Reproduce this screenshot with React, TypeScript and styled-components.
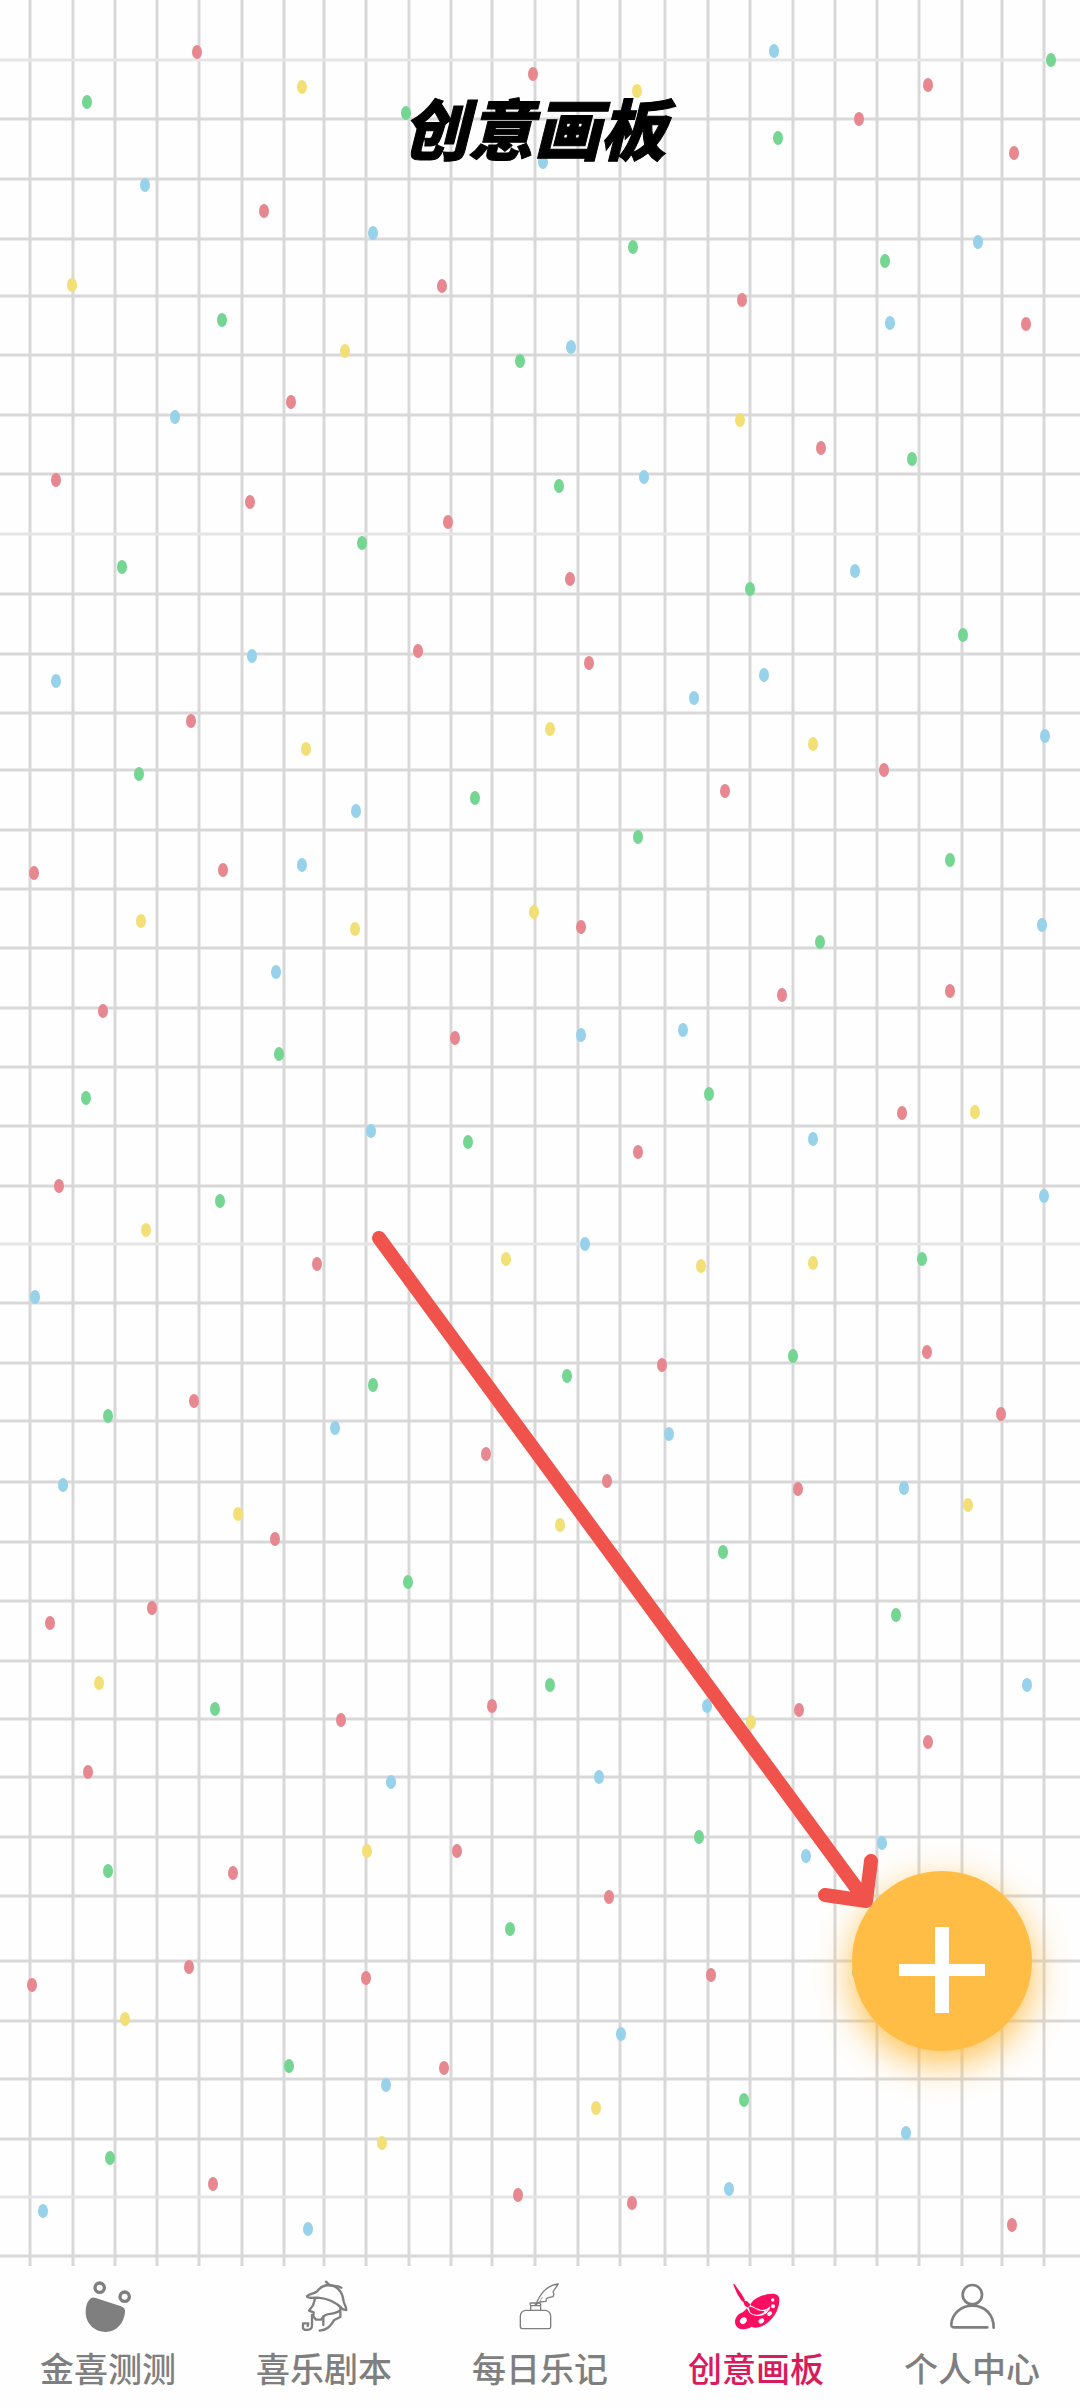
import React, { useState } from "react";
import styled, { createGlobalStyle } from "styled-components";

const Colors = {
    paper: "#fefefe",
    line: "#d9d8d8",
    softLine: "#e6e5e5",
    grey: "#7f7f7f",
    pink: "#d91a5c",
    brightPink: "#fb0d5f",
    orange: "#ffbd45",
    arrow: "#f0524c",
    black: "#000",
    white: "#fff",
};

const GlobalStyle = createGlobalStyle`
    * {
        box-sizing: border-box;
    }
    body {
        margin: 0;
        background: ${Colors.paper};
        font-family: "Noto Sans CJK SC", "Noto Sans", sans-serif;
    }
`;

const Page = styled.div`
    display: flex;
    flex-direction: column;
    min-height: 100vh;
`;

const Board = styled.main`
    position: relative;
    flex: 1;
    display: flex;
    flex-direction: column;
    align-items: center;
    padding-top: 86px;
`;

const Backdrop = styled.svg`
    position: absolute;
    inset: 0;
    width: 100%;
    height: 100%;
`;

const Pointer = styled(Backdrop)`
    pointer-events: none;
`;

const Title = styled.h1`
    position: relative;
    margin: 0;
    padding-right: 12px;
    font-size: 66px;
    line-height: 80px;
    font-weight: 900;
    font-style: italic;
    color: ${Colors.black};
    -webkit-text-stroke: 1px ${Colors.black};
`;

const AddButton = styled.button`
    position: absolute;
    right: 48px;
    bottom: 215px;
    display: flex;
    align-items: center;
    justify-content: center;
    width: 180px;
    height: 180px;
    padding: 18px 0 0;
    border: none;
    border-radius: 50%;
    background: ${Colors.orange};
    box-shadow: 0 12px 36px rgba(255, 182, 50, 0.85);
    cursor: pointer;
`;

const TabBar = styled.nav`
    display: flex;
    background: ${Colors.paper};
`;

const Tab = styled.a<{ $active: boolean }>`
    flex: 1;
    display: flex;
    flex-direction: column;
    align-items: center;
    gap: 14px;
    padding: 14px 0 20px;
    color: ${({ $active }) => ($active ? Colors.pink : Colors.grey)};
    font-size: 34px;
    line-height: 40px;
    font-weight: 500;
    text-decoration: none;
    svg {
        color: ${({ $active }) => ($active ? Colors.brightPink : Colors.grey)};
    }
`;

const TabIcon = styled.svg`
    width: 54px;
    height: 54px;
    fill: none;
    stroke: currentColor;
    stroke-linecap: round;
    stroke-linejoin: round;
`;

const columns = [
    30, 73, 115, 157, 199, 242, 284, 324, 366, 409, 451, 492, 535,
    578, 620, 665, 708, 750, 793, 835, 877, 919, 962, 1002, 1044,
];

const rows = [
    60, 119, 179, 239, 296, 355, 415, 474, 534, 594, 654, 713, 770,
    830, 889, 948, 1008, 1067, 1126, 1186, 1244, 1303, 1363, 1421, 1482,
    1542, 1601, 1661, 1719, 1777, 1837, 1896, 1961, 2021, 2079, 2139, 2197, 2256,
];

const softRows = [60, 534, 1244, 2197];

const dots: { color: string; points: number[][] }[] = [
    {
        color: "#e78790",
        points: [
            [197, 52], [533, 74], [264, 211], [442, 286], [291, 402], [56, 480], [928, 85],
            [859, 119], [1014, 153], [742, 300], [1026, 324], [821, 448], [250, 502], [448, 522],
            [570, 579], [418, 651], [589, 663], [191, 721], [884, 770], [725, 791], [34, 873],
            [223, 870], [581, 927], [782, 995], [950, 991], [103, 1011], [455, 1038], [902, 1113],
            [638, 1152], [59, 1186], [317, 1264], [662, 1365], [927, 1352], [194, 1401],
            [1001, 1414], [486, 1454], [607, 1481], [798, 1489], [275, 1539], [152, 1608],
            [50, 1623], [341, 1720], [492, 1706], [799, 1710], [928, 1742], [88, 1772],
            [457, 1851], [233, 1873], [609, 1897], [189, 1967], [32, 1985], [366, 1978],
            [711, 1975], [444, 2068], [213, 2184], [518, 2195], [632, 2203], [1012, 2225],
        ],
    },
    {
        color: "#74d692",
        points: [
            [87, 102], [406, 113], [222, 320], [520, 361], [1051, 60], [778, 138], [633, 247],
            [885, 261], [912, 459], [559, 486], [362, 543], [122, 567], [750, 589], [963, 635],
            [139, 774], [475, 798], [638, 837], [950, 860], [820, 942], [279, 1054], [86, 1098],
            [709, 1094], [468, 1142], [220, 1201], [922, 1259], [793, 1356], [567, 1376],
            [373, 1385], [108, 1416], [723, 1552], [408, 1582], [896, 1615], [550, 1685],
            [215, 1709], [699, 1837], [108, 1871], [510, 1929], [289, 2066], [744, 2100],
            [110, 2158], [857, 1972],
        ],
    },
    {
        color: "#f2df76",
        points: [
            [302, 87], [72, 285], [345, 351], [637, 91], [740, 420], [550, 729], [306, 749],
            [813, 744], [141, 921], [355, 929], [534, 912], [975, 1112], [146, 1230], [506, 1259],
            [701, 1266], [813, 1263], [238, 1514], [968, 1505], [560, 1525], [99, 1683],
            [751, 1722], [367, 1851], [125, 2019], [596, 2108], [382, 2143],
        ],
    },
    {
        color: "#97d2ea",
        points: [
            [145, 185], [373, 233], [175, 417], [543, 162], [774, 51], [978, 242], [890, 323],
            [571, 347], [644, 477], [855, 571], [252, 656], [764, 675], [56, 681], [694, 698],
            [1045, 736], [356, 811], [302, 865], [1042, 925], [276, 972], [581, 1035], [683, 1030],
            [371, 1131], [813, 1139], [1044, 1196], [585, 1244], [35, 1297], [335, 1428],
            [669, 1434], [63, 1485], [904, 1488], [1027, 1685], [707, 1706], [391, 1782],
            [599, 1777], [882, 1843], [806, 1856], [621, 2034], [386, 2085], [906, 2133],
            [729, 2189], [43, 2211], [308, 2229],
        ],
    },
];

const SmileIcon = () => (
    <TabIcon viewBox="0 0 162 162" aria-hidden="true">
        <circle cx="56" cy="23" r="14" strokeWidth="10" />
        <circle cx="131" cy="50" r="14" strokeWidth="10" />
        <path
            fill="currentColor"
            stroke="none"
            d="M44 54 L120 79 Q134 84 132 97 C129 131 105 156 74 156 C40 156 14 130 14 97 C14 80 17 69 25 59 Q32 50 44 54Z"
        />
    </TabIcon>
);

const DetectiveIcon = () => (
    <TabIcon viewBox="0 0 162 162" strokeWidth="7" aria-hidden="true">
        <path d="M30 49 C38 40 51 42 59 35 C69 22 83 15 97 15 C120 17 136 35 139 60 C140 72 148 78 148 90 L138 88 C119 68 92 55 62 53 C48 53 34 56 30 49Z" />
        <path d="M87 5 L98 16 M96 15 C108 20 120 15 133 23" />
        <path d="M54 57 L48 76 L36 92 L50 97 L49 109 L57 119 L72 119 L80 109" />
        <path d="M79 109 V135 M80 109 C88 98 110 105 127 93" />
        <path d="M130 82 V111 L112 120 C102 132 96 150 68 152" />
        <path d="M45 105 V138 C44 153 20 152 18 144 V130 H34 L32 138" />
    </TabIcon>
);

const InkIcon = () => (
    <TabIcon viewBox="0 0 162 162" strokeWidth="4" aria-hidden="true">
        <path d="M38 91 H97 Q112 93 113 108 V141 Q113 146 108 146 H28 Q23 146 22 141 V108 Q23 93 38 91Z" />
        <path d="M53 90 V77 M83 90 V77 M54 77 H83 M53 77 Q48 69 55 69 H80 Q85 72 82 77" />
        <path d="M66 76 L78 54 C90 32 106 15 136 12 C130 22 124 28 120 36 L123 42 L120 50 L106 53 L100 57 L99 64 L80 66 L71 73" />
        <path d="M79 67 L88 52" strokeWidth="2" />
    </TabIcon>
);

const PaletteIcon = () => (
    <TabIcon viewBox="0 0 162 162" aria-hidden="true">
        <path
            fill="currentColor"
            stroke="none"
            d="M72 62 C94 44 150 28 151 58 C152 92 128 126 98 139 C88 144 76 145 68 140 C58 147 34 152 24 141 C12 128 20 108 34 100 C44 96 50 90 72 62Z"
        />
        <path
            d="M15 14 L48 62 L60 72 L63 80 C78 84 82 96 108 96 C96 104 82 106 70 100 C58 94 62 86 55 80 L47 70Z"
            fill="currentColor"
            stroke={Colors.paper}
            strokeWidth="8"
        />
        <path d="M86 88 Q108 98 122 82 Q112 108 84 104" fill="none" stroke={Colors.paper} strokeWidth="4" />
        <path
            fill="currentColor"
            stroke="currentColor"
            strokeWidth="4"
            d="M15 14 L36 43 L46 60 L40 62 L26 40Z M44 64 L53 65 L62 74 L56 80 L49 76Z M61 82 C76 80 78 96 104 95 C94 104 76 104 68 98 C62 94 64 88 61 82Z"
        />
        <g fill={Colors.paper} stroke="none">
            <ellipse cx="43" cy="122" rx="11" ry="9" transform="rotate(-40 43 122)" />
            <ellipse cx="97" cy="123" rx="9" ry="7" transform="rotate(-30 97 123)" />
            <ellipse cx="122" cy="101" rx="8" ry="6" transform="rotate(-35 122 101)" />
            <circle cx="132" cy="79" r="6" />
            <circle cx="131" cy="60" r="5" />
        </g>
    </TabIcon>
);

const PersonIcon = () => (
    <TabIcon viewBox="0 0 162 162" strokeWidth="8" aria-hidden="true">
        <circle cx="82" cy="44" r="29" />
        <path d="M146 143 C146 104 120 77 82 77 C46 77 21 104 19 132 Q18 142 27 142 H127" />
    </TabIcon>
);

const tabs = [
    { id: "test", label: "金喜测测", Icon: SmileIcon },
    { id: "script", label: "喜乐剧本", Icon: DetectiveIcon },
    { id: "diary", label: "每日乐记", Icon: InkIcon },
    { id: "board", label: "创意画板", Icon: PaletteIcon },
    { id: "profile", label: "个人中心", Icon: PersonIcon },
];

function Paper() {
    return (
        <Backdrop viewBox="0 0 1080 2266" preserveAspectRatio="none" aria-hidden="true">
            {columns.map((x) => (
                <line key={x} x1={x} x2={x} y1="0" y2="2266" stroke={Colors.line} strokeWidth="3" />
            ))}
            {rows.map((y) => (
                <line
                    key={y}
                    x1="0"
                    x2="1080"
                    y1={y}
                    y2={y}
                    stroke={softRows.includes(y) ? Colors.softLine : Colors.line}
                    strokeWidth="3"
                />
            ))}
            {dots.map(({ color, points }) => (
                <g key={color} fill={color}>
                    {points.map(([x, y]) => (
                        <ellipse key={`${x}-${y}`} cx={x} cy={y} rx="5" ry="7" />
                    ))}
                </g>
            ))}
        </Backdrop>
    );
}

function App() {
    const [active, setActive] = useState<string>("board");

    return (
        <Page>
            <GlobalStyle />
            <Board>
                <Paper />
                <Title>创意画板</Title>
                <AddButton type="button" aria-label="新建画板">
                    <svg width="86" height="86" viewBox="0 0 86 86" aria-hidden="true">
                        <path d="M43 0V86" stroke={Colors.white} strokeWidth="14" />
                        <path d="M0 43H86" stroke={Colors.white} strokeWidth="12" />
                    </svg>
                </AddButton>
                <Pointer viewBox="0 0 1080 2266" preserveAspectRatio="none" aria-hidden="true">
                    <path
                        d="M379 1238 L866 1901 M825 1895 L866 1901 L871 1861"
                        fill="none"
                        stroke={Colors.arrow}
                        strokeWidth="14"
                        strokeLinecap="round"
                        strokeLinejoin="round"
                    />
                </Pointer>
            </Board>
            <TabBar>
                {tabs.map(({ id, label, Icon }) => (
                    <Tab
                        key={id}
                        href={`#${id}`}
                        $active={active === id}
                        aria-current={active === id ? "page" : undefined}
                        onClick={() => setActive(id)}
                    >
                        <Icon />
                        {label}
                    </Tab>
                ))}
            </TabBar>
        </Page>
    );
}

export default App;
